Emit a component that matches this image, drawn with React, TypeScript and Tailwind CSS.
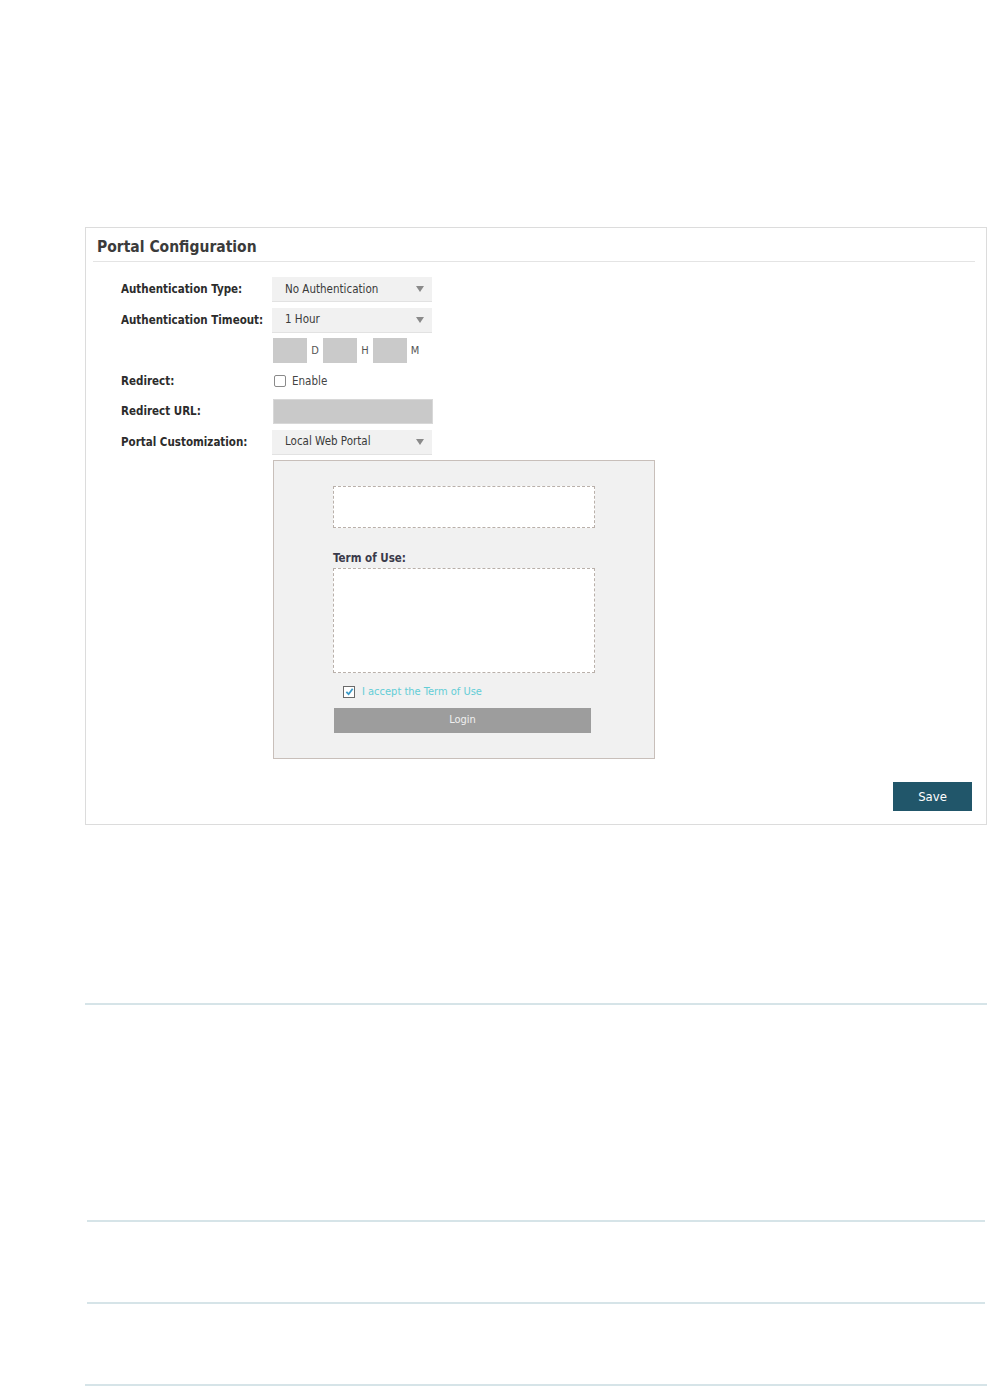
import React from 'react';

const font = { fontFamily: '"DejaVu Sans Condensed", "DejaVu Sans", Tahoma, sans-serif' };

const Caret: React.FC = () => (
  <svg className="w-[8px] h-[6px]" viewBox="0 0 8 6">
    <path d="M0 0h8L4 6z" fill="#8a8a8a" />
  </svg>
);

const Select: React.FC<{ value: string }> = ({ value }) => (
  <div className="w-[160px] h-[25px] bg-[#f1f1f1] border-b border-[#e2e2e2] flex items-center justify-between pl-[13px] pr-[8px] text-[11.5px] text-[#3a3a3a]">
    <span>{value}</span>
    <Caret />
  </div>
);

const Label: React.FC<{ children: React.ReactNode }> = ({ children }) => (
  <div className="h-[25px] flex items-center text-[11.5px] font-bold text-[#2c2c2c]">{children}</div>
);

export default function App() {
  return (
    <div className="min-h-[1386px] bg-white pt-[227px]" style={font}>
      {/* Portal Configuration panel */}
      <div className="ml-[85px] w-[902px] border border-[#dcdcdc] pb-[13px]">
        <div className="ml-[7px] mr-[11px] pl-[4px] pt-[8px] pb-[2px] border-b border-[#e4e4e4]">
          <h2 className="text-[15.5px] font-bold text-[#3b3b3b]">Portal Configuration</h2>
        </div>

        <div className="pl-[35px] pt-[15px] grid grid-cols-[151px_1fr] gap-y-[5.5px]">
          <Label>Authentication Type:</Label>
          <Select value="No Authentication" />

          <Label>Authentication Timeout:</Label>
          <Select value="1 Hour" />

          <div />
          <div className="h-[25px] flex items-center text-[11px] text-[#555] pl-[1px]">
            <div className="w-[34px] h-[25px] bg-[#cacaca]" />
            <span className="w-[16px] text-center">D</span>
            <div className="w-[34px] h-[25px] bg-[#cacaca]" />
            <span className="w-[16px] text-center">H</span>
            <div className="w-[34px] h-[25px] bg-[#cacaca]" />
            <span className="w-[16px] text-center">M</span>
          </div>

          <Label>Redirect:</Label>
          <div className="h-[25px] flex items-center gap-[6px] pl-[2px] text-[11.5px] text-[#444]">
            <div className="w-[12px] h-[12px] border border-[#8a8a8a] rounded-[2px] bg-white" />
            <span>Enable</span>
          </div>

          <Label>Redirect URL:</Label>
          <div className="h-[25px] pl-[1px]">
            <div className="w-[160px] h-[25px] bg-[#c9c9c9] border border-[#d8d8d8]" />
          </div>

          <Label>Portal Customization:</Label>
          <Select value="Local Web Portal" />

          <div />
          <div className="pl-[1px]">
            {/* Preview */}
            <div className="w-[382px] h-[299px] border border-[#c8bfba] bg-[#f1f1f1] pl-[59px] pt-[25px]">
              <div className="w-[262px] h-[42px] bg-white border border-dashed border-[#b9b0aa]" />
              <div className="mt-[22px] text-[11.5px] font-bold text-[#3a3a4a]">Term of Use:</div>
              <div className="w-[262px] h-[105px] bg-white border border-dashed border-[#b9b0aa]" />
              <div className="mt-[11px] ml-[10px] flex items-center gap-[7px]">
                <div className="w-[12px] h-[12px] border border-[#6a6a6a] bg-white flex items-center justify-center">
                  <svg className="w-[9px] h-[9px]" viewBox="0 0 10 10">
                    <path d="M1.5 5.5l2.5 2.5 4.5-6" fill="none" stroke="#3a9ac8" strokeWidth={2} />
                  </svg>
                </div>
                <span className="text-[11px] text-[#63cdd6]">I accept the Term of Use</span>
              </div>
              <div className="mt-[8px] ml-[1px] w-[257px] h-[25px] bg-[#9d9d9d] flex items-center justify-center text-[11px] text-[#f0f0f0]">
                Login
              </div>
            </div>
          </div>
        </div>

        <div className="flex justify-end pr-[14px] mt-[23px]">
          <button className="w-[79px] h-[29px] bg-[#21566a] text-white text-[13px]">Save</button>
        </div>
      </div>

      {/* Section dividers */}
      <div className="mt-[178px] ml-[85px] w-[902px] h-[2px] bg-[#d6e4e8]" />
      <div className="mt-[215px] ml-[87px] w-[898px] h-[2px] bg-[#d6e4e8]" />
      <div className="mt-[80px] ml-[87px] w-[898px] h-[2px] bg-[#d6e4e8]" />
      <div className="mt-[80px] ml-[85px] w-[902px] h-[2px] bg-[#d6e4e8]" />
    </div>
  );
}
